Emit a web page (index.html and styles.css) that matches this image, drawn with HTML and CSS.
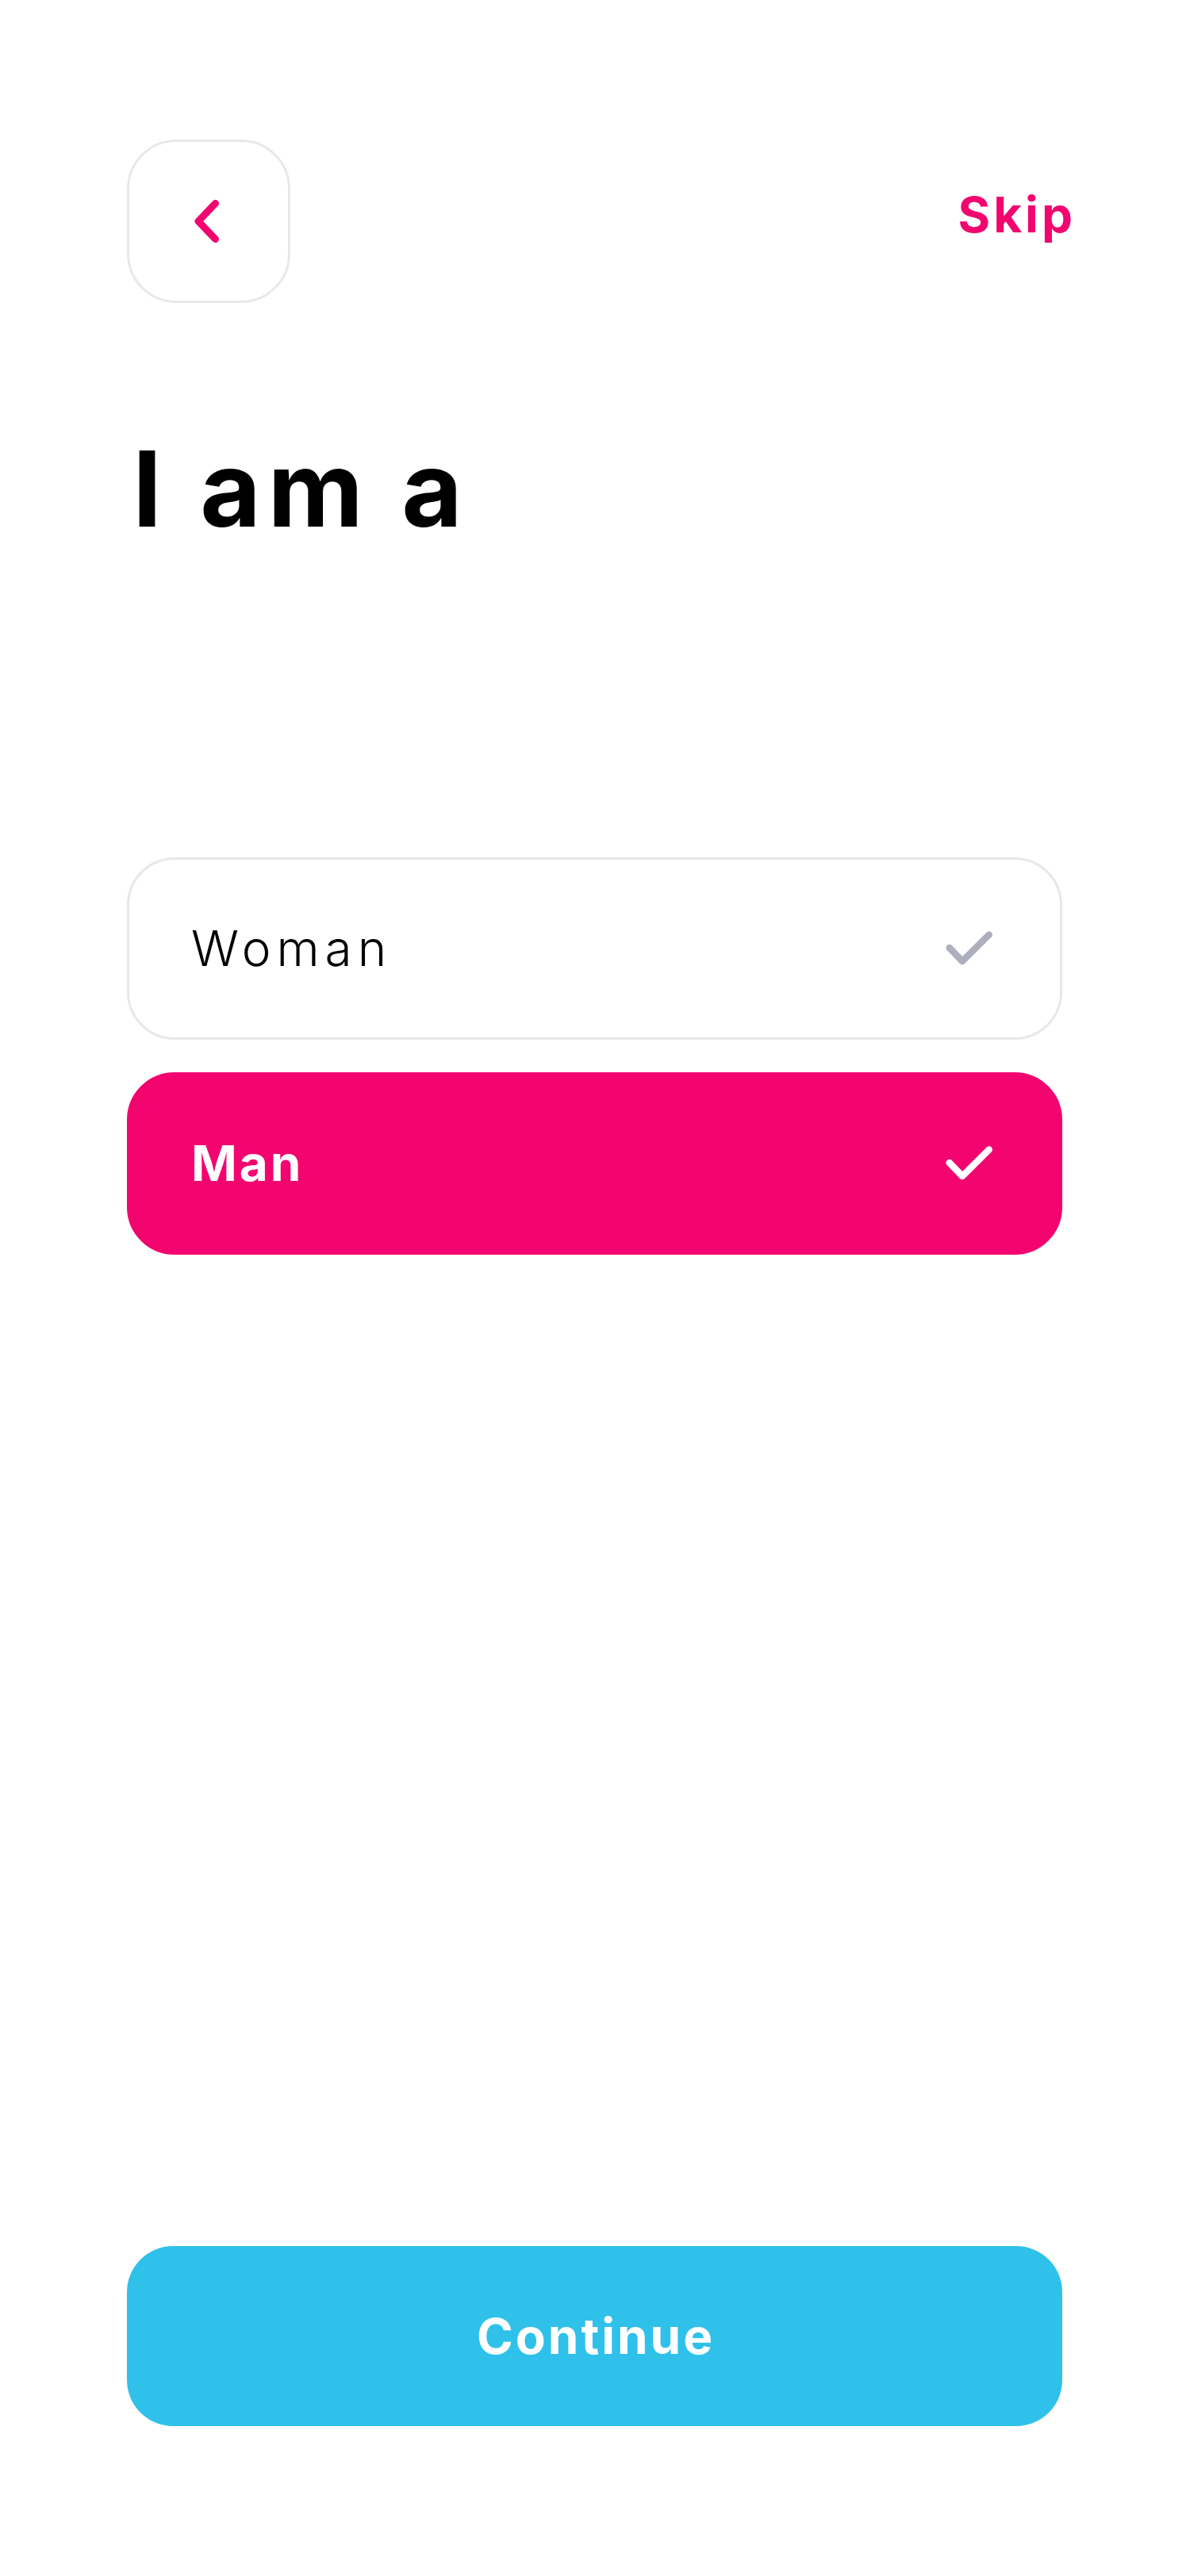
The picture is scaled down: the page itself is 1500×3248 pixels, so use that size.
FILE: index.html
```html
<!DOCTYPE html>
<html lang="en">
<head>
<meta charset="utf-8">
<title>I am a</title>
<link rel="stylesheet" href="styles.css">
</head>
<body>
<main class="screen">
  <header class="topbar">
    <button class="back" aria-label="Back">
      <svg class="back-icon" viewBox="0 0 60 60" width="60" height="60">
        <path d="M38.5 7.5 L17 30 L38.5 52.5" fill="none" stroke="#F2056F" stroke-width="9" stroke-linecap="round" stroke-linejoin="round"/>
      </svg>
    </button>
    <a class="skip" href="#">Skip</a>
  </header>

  <h1 class="title">I am a</h1>

  <div class="options">
    <div class="option">
      <span class="option-label">Woman</span>
      <svg class="check" viewBox="0 0 64 48" width="64" height="48">
        <path d="M6.7 23 L23 40 L56.7 6.5" fill="none" stroke="#ADAFBC" stroke-width="8.5" stroke-linecap="round" stroke-linejoin="round"/>
      </svg>
    </div>
    <div class="option option-selected">
      <span class="option-label">Man</span>
      <svg class="check" viewBox="0 0 64 48" width="64" height="48">
        <path d="M6.7 23 L23 40 L56.7 6.5" fill="none" stroke="#FFFFFF" stroke-width="8.5" stroke-linecap="round" stroke-linejoin="round"/>
      </svg>
    </div>
  </div>

  <button class="continue">Continue</button>
</main>
</body>
</html>
```

FILE: styles.css
```css
* { box-sizing: border-box; }
html, body { margin: 0; padding: 0; background: #ffffff; }
body { font-family: Inter, "Open Sans", "Liberation Sans", sans-serif; color: #000; }

.screen {
  height: 3248px;
  display: flex;
  flex-direction: column;
  padding: 176px 161px 189px 160px;
}

.topbar {
  display: flex;
  justify-content: space-between;
  align-items: center;
}

.back {
  width: 206px;
  height: 206px;
  border: 3px solid #E8E7EB;
  border-radius: 62px;
  background: #fff;
  display: flex;
  align-items: center;
  justify-content: center;
  padding: 0;
}

.back-icon { display: block; }

.skip {
  font-size: 62px;
  font-weight: 700;
  letter-spacing: 4px;
  color: #F2056F;
  text-decoration: none;
  line-height: 1;
  margin-bottom: 16px;
  margin-right: -17px;
}

.title {
  margin: 168px 0 0 0;
  padding-left: 7px;
  font-size: 132px;
  line-height: 1;
  font-weight: 700;
  letter-spacing: 8.5px;
}

.options {
  margin-top: 399px;
  display: flex;
  flex-direction: column;
  gap: 41px;
}

.option {
  height: 230px;
  border: 3px solid #E8E7EB;
  border-radius: 60px;
  display: flex;
  align-items: center;
  justify-content: space-between;
  padding: 0 82px 0 78px;
  background: #fff;
}

.option-label {
  font-size: 62px;
  font-weight: 300;
  line-height: 1;
  letter-spacing: 7px;
}

.option-selected {
  background: #F2056F;
  border-color: #F2056F;
  color: #fff;
}

.option-selected .option-label {
  font-weight: 700;
  letter-spacing: 3px;
}

.check { display: block; }

.continue {
  margin-top: auto;
  height: 227px;
  border: 0;
  border-radius: 58px;
  background: #2FC1EA;
  color: #fff;
  font-family: inherit;
  font-size: 62px;
  font-weight: 700;
  letter-spacing: 3px;
  width: 100%;
  padding: 0 0 0 3px;
}
```
